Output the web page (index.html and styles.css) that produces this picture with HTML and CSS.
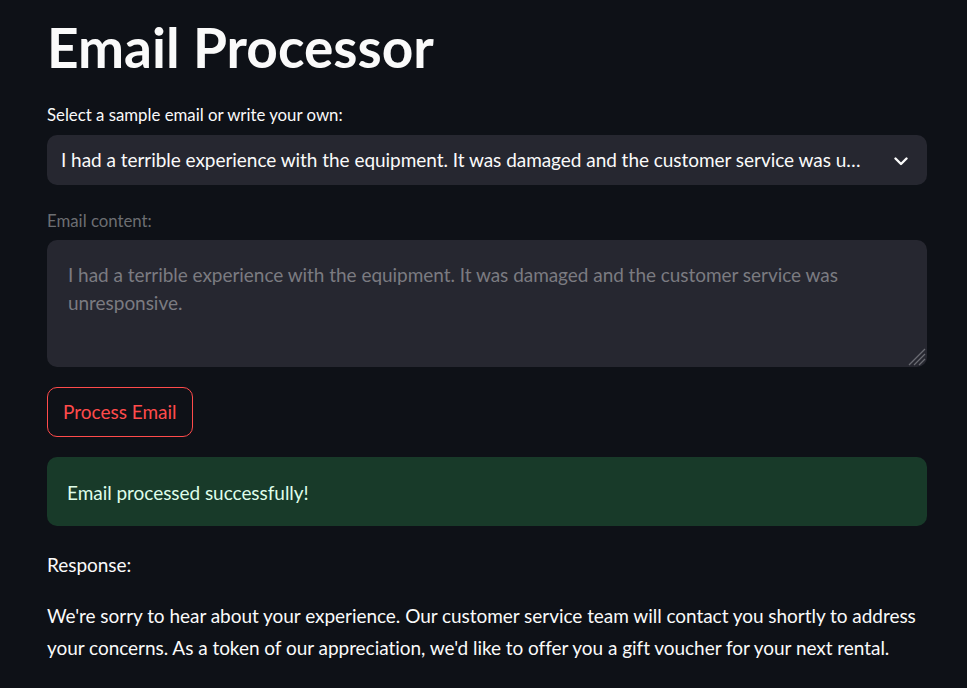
FILE: index.html
```html
<!DOCTYPE html>
<html lang="en">
<head>
<meta charset="utf-8">
<title>Email Processor</title>
<link rel="stylesheet" href="styles.css">
</head>
<body>
<main class="main">
  <h1 class="title">Email Processor</h1>

  <div class="widget widget-select">
    <label class="label">Select a sample email or write your own:</label>
    <div class="select">
      <span class="select-value">I had a terrible experience with the equipment. It was damaged and the customer service was unresponsive.</span>
      <span class="select-arrow">
        <svg width="14" height="9" viewBox="0 0 14 9"><polyline points="1.5,1.5 7,7 12.5,1.5" fill="none" stroke="#fafafa" stroke-width="2.4" stroke-linecap="round" stroke-linejoin="round"/></svg>
      </span>
    </div>
  </div>

  <div class="widget widget-text">
    <label class="label label-disabled">Email content:</label>
    <div class="textarea">
      <p class="textarea-text">I had a terrible experience with the equipment. It was damaged and the customer service was unresponsive.</p>
      <svg class="grip" width="20" height="20" viewBox="0 0 20 20">
        <line x1="19" y1="3" x2="3" y2="19" stroke="#6a6b72" stroke-width="1.3"/>
        <line x1="19" y1="8" x2="8" y2="19" stroke="#6a6b72" stroke-width="1.3"/>
        <line x1="19" y1="13" x2="13" y2="19" stroke="#6a6b72" stroke-width="1.3"/>
      </svg>
    </div>
  </div>

  <div class="widget widget-button">
    <button class="button" type="button">Process Email</button>
  </div>

  <div class="alert alert-success">Email processed successfully!</div>

  <p class="text response-label">Response:</p>
  <p class="text response-body">We're sorry to hear about your experience. Our customer service team will contact you shortly to address your concerns. As a token of our appreciation, we'd like to offer you a gift voucher for your next rental.</p>
</main>
</body>
</html>
```
FILE: styles.css
```css
* { box-sizing: border-box; }

html, body {
  margin: 0;
  padding: 0;
  background: #0e1117;
  color: #fafafa;
  font-family: Lato, "Noto Sans", sans-serif;
}

.main {
  width: 880px;
  margin-left: 47px;
  display: flex;
  flex-direction: column;
}

.title {
  margin: 14px 0 0 0;
  font-size: 55px;
  font-weight: 700;
  line-height: 66px;
  color: #fafafa;
}

.widget { display: flex; flex-direction: column; }

.widget-select { margin-top: 23px; }
.widget-text { margin-top: 24px; }
.widget-button { margin-top: 20px; align-items: flex-start; }

.label {
  display: block;
  font-size: 16.8px;
  line-height: 24px;
  height: 24px;
  margin-bottom: 8px;
  color: #fafafa;
}
.label-disabled { color: #6c6e72; margin-bottom: 7px; }

.select {
  height: 50px;
  background: #262730;
  border-radius: 10px;
  display: flex;
  align-items: center;
  padding-left: 14px;
}
.select-value {
  flex: 1;
  min-width: 0;
  white-space: nowrap;
  overflow: hidden;
  text-overflow: ellipsis;
  font-size: 19px;
  letter-spacing: -0.04px;
  line-height: 32px;
}
.select-arrow {
  width: 61px;
  flex: none;
  display: flex;
  align-items: center;
  padding-left: 28px;
  padding-top: 2px;
}

.textarea {
  position: relative;
  height: 127px;
  background: #262730;
  border-radius: 10px;
  padding: 21px 20px 20px 21px;
}
.textarea-text {
  margin: 0;
  font-size: 19px;
  line-height: 28px;
  letter-spacing: -0.04px;
  color: #7b7b81;
}
.grip {
  position: absolute;
  right: 1px;
  bottom: 1px;
}

.button {
  height: 50px;
  padding: 0 15px;
  background: #0e1117;
  border: 1px solid #ff4b4b;
  border-radius: 10px;
  color: #ff4b4b;
  font-family: Lato, "Noto Sans", sans-serif;
  font-size: 19px;
  letter-spacing: 0;
  line-height: 32px;
  cursor: pointer;
}

.alert {
  margin-top: 20px;
  height: 69px;
  padding: 20px 20px 0 20px;
  border-radius: 10px;
  font-size: 19px;
  line-height: 32px;
  letter-spacing: -0.04px;
}
.alert-success {
  background: #183a29;
  color: #dffde9;
}

.text {
  margin: 0;
  font-size: 19px;
  line-height: 32px;
  letter-spacing: -0.04px;
  color: #fafafa;
}
.response-label { margin-top: 23px; }
.response-body { margin-top: 19px; }
```
